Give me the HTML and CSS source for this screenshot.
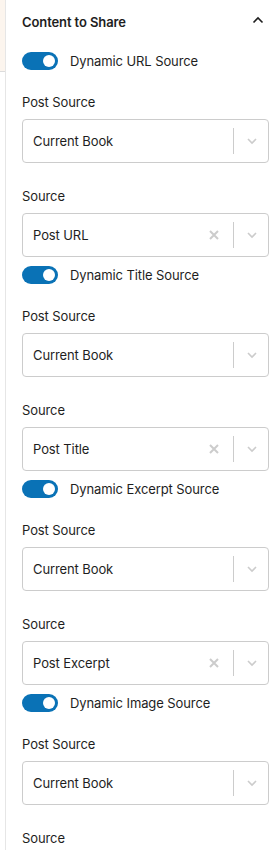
FILE: index.html
```html
<!DOCTYPE html>
<html lang="en">
  <head>
    <meta charset="UTF-8" />
    <meta name="viewport" content="width=device-width, initial-scale=1.0" />
    <title>Content to Share</title>
    <link rel="stylesheet" href="styles.css">
  </head>
  <body>
    <div class="layout">
      <div class="edge">
        <div class="edge-top"></div>
      </div>

      <div class="panel">
        <div class="panel-header">
          <h2>Content to Share</h2>
          <svg class="caret" width="12" height="8" viewBox="0 0 12 8">
            <path d="M1.5 6.5 L6 2 L10.5 6.5" fill="none" stroke="#1e1e1e" stroke-width="1.6" />
          </svg>
        </div>

        <!-- URL -->
        <div class="group">
          <label class="toggle-row">
            <span class="toggle"><span class="knob"></span></span>
            Dynamic URL Source
          </label>
          <p class="field-label">Post Source</p>
          <div class="select">
            <span class="value">Current Book</span>
            <span class="sep"></span>
            <svg class="arrow" width="12" height="8" viewBox="0 0 12 8"><path d="M2 2 L6 6 L10 2" fill="none" stroke="#cccccc" stroke-width="1.6" /></svg>
          </div>
          <p class="field-label">Source</p>
          <div class="select">
            <span class="value">Post URL</span>
            <svg class="clear" width="10" height="10" viewBox="0 0 10 10"><path d="M1 1 L9 9 M9 1 L1 9" stroke="#cccccc" stroke-width="2" /></svg>
            <span class="sep"></span>
            <svg class="arrow" width="12" height="8" viewBox="0 0 12 8"><path d="M2 2 L6 6 L10 2" fill="none" stroke="#cccccc" stroke-width="1.6" /></svg>
          </div>
        </div>

        <!-- Title -->
        <div class="group">
          <label class="toggle-row">
            <span class="toggle"><span class="knob"></span></span>
            Dynamic Title Source
          </label>
          <p class="field-label">Post Source</p>
          <div class="select">
            <span class="value">Current Book</span>
            <span class="sep"></span>
            <svg class="arrow" width="12" height="8" viewBox="0 0 12 8"><path d="M2 2 L6 6 L10 2" fill="none" stroke="#cccccc" stroke-width="1.6" /></svg>
          </div>
          <p class="field-label">Source</p>
          <div class="select">
            <span class="value">Post Title</span>
            <svg class="clear" width="10" height="10" viewBox="0 0 10 10"><path d="M1 1 L9 9 M9 1 L1 9" stroke="#cccccc" stroke-width="2" /></svg>
            <span class="sep"></span>
            <svg class="arrow" width="12" height="8" viewBox="0 0 12 8"><path d="M2 2 L6 6 L10 2" fill="none" stroke="#cccccc" stroke-width="1.6" /></svg>
          </div>
        </div>

        <!-- Excerpt -->
        <div class="group">
          <label class="toggle-row">
            <span class="toggle"><span class="knob"></span></span>
            Dynamic Excerpt Source
          </label>
          <p class="field-label">Post Source</p>
          <div class="select">
            <span class="value">Current Book</span>
            <span class="sep"></span>
            <svg class="arrow" width="12" height="8" viewBox="0 0 12 8"><path d="M2 2 L6 6 L10 2" fill="none" stroke="#cccccc" stroke-width="1.6" /></svg>
          </div>
          <p class="field-label">Source</p>
          <div class="select">
            <span class="value">Post Excerpt</span>
            <svg class="clear" width="10" height="10" viewBox="0 0 10 10"><path d="M1 1 L9 9 M9 1 L1 9" stroke="#cccccc" stroke-width="2" /></svg>
            <span class="sep"></span>
            <svg class="arrow" width="12" height="8" viewBox="0 0 12 8"><path d="M2 2 L6 6 L10 2" fill="none" stroke="#cccccc" stroke-width="1.6" /></svg>
          </div>
        </div>

        <!-- Image -->
        <div class="group">
          <label class="toggle-row">
            <span class="toggle"><span class="knob"></span></span>
            Dynamic Image Source
          </label>
          <p class="field-label">Post Source</p>
          <div class="select">
            <span class="value">Current Book</span>
            <span class="sep"></span>
            <svg class="arrow" width="12" height="8" viewBox="0 0 12 8"><path d="M2 2 L6 6 L10 2" fill="none" stroke="#cccccc" stroke-width="1.6" /></svg>
          </div>
          <p class="field-label">Source</p>
        </div>
      </div>
    </div>
  </body>
</html>
```

FILE: styles.css
```css
body {
  margin: 0;
  padding: 0;
  font-family: "Inter", "Liberation Sans", sans-serif;
  font-size: 13px;
  letter-spacing: -0.1px;
  color: #1e1e1e;
  background-color: #ffffff;
}

.layout {
  display: flex;
  min-height: 850px;
}

.edge {
  width: 5px;
  flex-shrink: 0;
}

.edge-top {
  height: 71px;
  background-color: #fcf5ee;
  border-bottom: 1px solid #dcdcdc;
}

.panel {
  flex: 1;
  border-left: 1px solid #e6e6e6;
  padding: 0 10px 0 16px;
}

.panel-header {
  display: flex;
  justify-content: space-between;
  align-items: center;
  height: 43px;
}

.panel-header h2 {
  margin: 0;
  font-size: 13px;
  font-weight: 600;
}

.caret {
  margin-right: 5px;
  margin-top: -4px;
}

.group {
  padding-top: 9px;
}

.group:first-of-type {
  padding-top: 8px;
}

.toggle-row {
  display: flex;
  align-items: center;
  gap: 12px;
  height: 18px;
}

.toggle {
  width: 36px;
  height: 18px;
  border-radius: 9px;
  background-color: #0a72b6;
  position: relative;
  flex-shrink: 0;
}

.knob {
  position: absolute;
  right: 3px;
  top: 3px;
  width: 12px;
  height: 12px;
  border-radius: 50%;
  background-color: #ffffff;
}

.field-label {
  margin: 23px 0 8px;
  line-height: 18px;
}

.select + .field-label {
  margin-top: 24px;
}

.select {
  display: flex;
  align-items: center;
  height: 42px;
  border: 1px solid #cccccc;
  border-radius: 4px;
  padding-left: 10px;
}

.value {
  flex: 1;
}

.clear {
  margin-right: 14px;
}

.sep {
  width: 1px;
  height: 26px;
  background-color: #cccccc;
}

.arrow {
  margin: 0 10px 0 12px;
}
```
